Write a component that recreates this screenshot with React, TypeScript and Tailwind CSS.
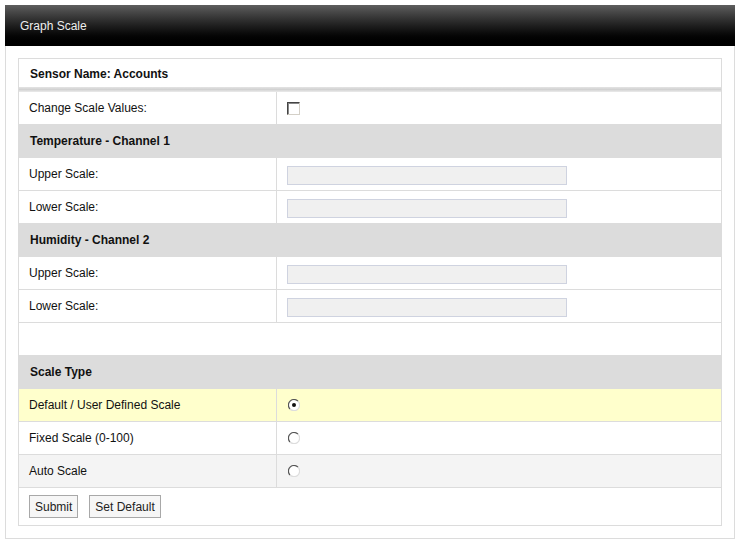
import React from "react";

function Checkbox() {
  return (
    <span className="block w-[13px] h-[13px] bg-white border border-t-[#444] border-l-[#444] border-r-[#d4d0c8] border-b-[#d4d0c8] shadow-[inset_1px_1px_0_#888]" />
  );
}

function Radio({ checked }: { checked?: boolean }) {
  return (
    <svg width="12" height="12" viewBox="0 0 12 12" className="block">
      <circle cx="6" cy="6" r="5.5" fill="#fff" />
      <path d="M10 2.2 A5.5 5.5 0 0 0 2 10" fill="none" stroke="#555" strokeWidth="1.2" />
      <path d="M2 10 A5.5 5.5 0 0 0 10 2.2" fill="none" stroke="#ddd" strokeWidth="1.2" />
      {checked && <circle cx="6" cy="6" r="2" fill="#111" />}
    </svg>
  );
}

function ScaleInput() {
  return <span className="block w-[280px] h-[19px] mt-[2px] bg-[#f0f0f0] border border-[#cfd3e0]" />;
}

function Row({
  label,
  bg = "bg-white",
  children,
}: {
  label: string;
  bg?: string;
  children?: React.ReactNode;
}) {
  return (
    <div className={`flex h-[33px] border-b border-[#dcdcdc] ${bg}`}>
      <div className="w-[258px] shrink-0 flex items-center pl-[10px] border-r border-[#dcdcdc]">
        {label}
      </div>
      <div className="flex-1 flex items-center pl-[10px]">{children}</div>
    </div>
  );
}

function Section({ title }: { title: string }) {
  return (
    <div className="h-[33px] flex items-center pl-[11px] bg-[#dcdcdc] font-bold border-b border-[#dcdcdc]">
      {title}
    </div>
  );
}

export default function App() {
  return (
    <div
      className="min-h-screen bg-white pt-[5px] pl-[5px] text-[12px] text-[#111]"
      style={{ fontFamily: '"Liberation Sans", Arial, sans-serif' }}
    >
      <div className="w-[730px]">
        <div className="h-[41px] flex items-center pl-[15px] bg-gradient-to-b from-[#5e5e5e] to-[#000] text-[#eee]">
          Graph Scale
        </div>
        <div className="border-x border-b border-[#dcdcdc] p-[12px]">
          <div className="border border-[#dcdcdc]">
            <div className="h-[28px] flex items-center pl-[11px] pt-[2px] font-bold">Sensor Name: Accounts</div>
            <div className="h-[5px] bg-gradient-to-b from-[#e4e4e4] via-[#d2d2d2] to-[#ebebeb]" />
            <Row label="Change Scale Values:">
              <Checkbox />
            </Row>
            <Section title="Temperature - Channel 1" />
            <Row label="Upper Scale:">
              <ScaleInput />
            </Row>
            <Row label="Lower Scale:">
              <ScaleInput />
            </Row>
            <Section title="Humidity - Channel 2" />
            <Row label="Upper Scale:">
              <ScaleInput />
            </Row>
            <Row label="Lower Scale:">
              <ScaleInput />
            </Row>
            <div className="h-[33px] border-b border-[#dcdcdc]" />
            <Section title="Scale Type" />
            <Row label="Default / User Defined Scale" bg="bg-[#ffffcc]">
              <span className="ml-[1px]">
                <Radio checked />
              </span>
            </Row>
            <Row label="Fixed Scale (0-100)">
              <span className="ml-[1px]">
                <Radio />
              </span>
            </Row>
            <Row label="Auto Scale" bg="bg-[#f4f4f4]">
              <span className="ml-[1px]">
                <Radio />
              </span>
            </Row>
            <div className="flex items-start gap-[11px] pl-[10px] pt-[7px] h-[37px]">
              <button className="h-[23px] px-[5px] border border-[#a8a8a8] bg-[#f6f6f6] text-[#222] text-[12px]">
                Submit
              </button>
              <button className="h-[23px] px-[5px] border border-[#a8a8a8] bg-[#f6f6f6] text-[#222] text-[12px]">
                Set Default
              </button>
            </div>
          </div>
        </div>
      </div>
    </div>
  );
}
